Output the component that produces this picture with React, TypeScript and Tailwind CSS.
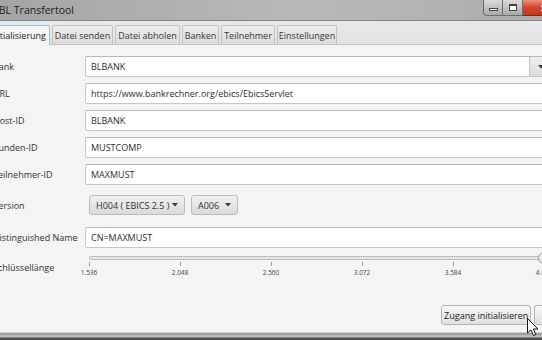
import React from "react";

const TABS: { label: string; cls: string; active?: boolean }[] = [
  { label: "Initialisierung", cls: "w-[62px]", active: true },
  { label: "Datei senden", cls: "w-[61px]" },
  { label: "Datei abholen", cls: "w-[65px]" },
  { label: "Banken", cls: "w-[37px]" },
  { label: "Teilnehmer", cls: "w-[54px]" },
  { label: "Einstellungen", cls: "w-[60px]" },
];

function Label({ children }: { children: React.ReactNode }) {
  return <div className="w-[92px] shrink-0 text-[#333] whitespace-nowrap">{children}</div>;
}

function TextField({ value }: { value: string }) {
  return (
    <div className="h-full flex-1 bg-white border border-[#c6c6c6] border-t-[#b8b8b8] rounded-[2px] flex items-center pl-[5px] text-[#2e2e2e] whitespace-nowrap">
      {value}
    </div>
  );
}

function Row({ label, value }: { label: string; value: string }) {
  return (
    <div className="flex items-center h-[21px]">
      <Label>{label}</Label>
      <TextField value={value} />
    </div>
  );
}

function Caret() {
  return (
    <svg width="6" height="4" viewBox="0 0 6 4" className="shrink-0">
      <path d="M0 0 L6 0 L3 3.5 Z" fill="#3a3a3a" />
    </svg>
  );
}

function Drop({ text, cls }: { text: string; cls: string }) {
  return (
    <div
      className={`${cls} h-[20px] flex items-center justify-between px-[6px] border border-[#bcbcbc] rounded-[3px] bg-gradient-to-b from-[#f1f1f1] to-[#dadada] text-[#333] whitespace-nowrap`}
    >
      <span>{text}</span>
      <Caret />
    </div>
  );
}

const TICKS = ["1.536", "2.048", "2.560", "3.072", "3.584", "4.096"];

export default function App() {
  return (
    <div className="relative w-[542px] h-[340px] overflow-hidden bg-[#f4f4f4] font-['Open_Sans','Noto_Sans',sans-serif] text-[9px] leading-none">
      <div className="ml-[-16px] w-[640px] h-[340px] flex flex-col">
        {/* title bar */}
        <div className="h-[21px] shrink-0 flex items-start bg-gradient-to-r from-[#a4a4a4] via-[#b9b9b9] to-[#a8a8a8] border-b border-[#858585]">
          <div className="pl-[9px] pt-[5px] text-[10.5px] text-[#1e1e1e]">EBL Transfertool</div>
          <div className="ml-auto mr-[58px] flex">
            <div className="w-[20px] h-[16px] border border-[#6e6e6e] border-t-0 rounded-bl-[4px] bg-gradient-to-b from-[#dcdcdc] to-[#a9a9a9] flex items-end justify-center pb-[4px]">
              <div className="w-[9px] h-[3px] bg-white border border-[#444]" />
            </div>
            <div className="w-[20px] h-[16px] border-b border-r border-[#6e6e6e] bg-gradient-to-b from-[#dcdcdc] to-[#a9a9a9] flex items-center justify-center">
              <div className="w-[8px] h-[7px] bg-white border border-[#444] border-t-2" />
            </div>
            <div className="w-[43px] h-[16px] border-b border-r border-[#7a2a1a] rounded-br-[4px] bg-gradient-to-b from-[#e8907a] via-[#d0452a] to-[#c0391f] flex items-center justify-center text-white text-[10px] font-bold">
              ✕
            </div>
          </div>
        </div>

        {/* tab strip */}
        <div className="h-[24px] shrink-0 flex items-end gap-[2px] pl-[4px] bg-gradient-to-b from-[#e9e9e9] to-[#e2e2e2] border-b border-[#c4c4c4]">
          {TABS.map((t) =>
            t.active ? (
              <div
                key={t.label}
                className={`${t.cls} h-[20px] mb-[-1px] flex items-center justify-end pr-[3px] bg-[#f4f4f4] border border-b-0 border-[#93c2e4] rounded-t-[2px] text-[#222] whitespace-nowrap overflow-hidden`}
              >
                {t.label}
              </div>
            ) : (
              <div
                key={t.label}
                className={`${t.cls} h-[19px] flex items-center justify-center bg-gradient-to-b from-[#ececec] to-[#dcdcdc] border border-b-0 border-[#c2c2c2] rounded-t-[2px] text-[#3a3a3a] whitespace-nowrap`}
              >
                {t.label}
              </div>
            )
          )}
        </div>

        {/* content */}
        <div className="flex-1 flex flex-col pt-[11px] pl-[9px] pr-[10px] pb-[7px]">
          <div className="flex flex-col gap-[6px]">
            <div className="flex items-center h-[21px]">
              <Label>Bank</Label>
              <div className="w-[467px] h-full flex bg-white border border-[#c6c6c6] border-t-[#b8b8b8] rounded-[2px]">
                <div className="flex-1 flex items-center pl-[5px] text-[#2e2e2e]">BLBANK</div>
                <div className="w-[22px] h-full flex items-center justify-center border-l border-[#c6c6c6] bg-gradient-to-b from-[#f0f0f0] to-[#dcdcdc]">
                  <Caret />
                </div>
              </div>
            </div>
            <Row label="URL" value="https://www.bankrechner.org/ebics/EbicsServlet" />
            <Row label="Host-ID" value="BLBANK" />
            <Row label="Kunden-ID" value="MUSTCOMP" />
            <Row label="Teilnehmer-ID" value="MAXMUST" />
          </div>

          <div className="flex items-center h-[20px] mt-[10px]">
            <Label>Version</Label>
            <div className="flex gap-[6px] pl-[4px]">
              <Drop text="H004 ( EBICS 2.5 )" cls="w-[96px]" />
              <Drop text="A006" cls="w-[47px]" />
            </div>
          </div>

          <div className="flex items-center h-[21px] mt-[12px]">
            <Label>Distinguished Name</Label>
            <TextField value="CN=MAXMUST" />
          </div>

          <div className="flex items-start h-[28px] mt-[3px]">
            <div className="pt-[12px]">
              <Label>Schlüssellänge</Label>
            </div>
            <div className="relative ml-[4px] w-[455px] h-full">
              <div className="absolute left-0 right-0 top-[5px] h-[4px] rounded-full bg-[#e6e6e6] border border-[#bdbdbd]" />
              {TICKS.map((t, i) => (
                <div key={t} className="absolute top-[11px] flex flex-col items-center w-[24px] ml-[-12px]" style={{ left: `${i * 91}px` }}>
                  <div className="w-px h-[4px] bg-[#9a9a9a]" />
                  <div className="mt-[4px] text-[6.5px] text-[#444]">{t}</div>
                </div>
              ))}
              <div className="absolute top-[1px] left-[449px] w-[12px] h-[12px] rounded-full border border-[#9f9f9f] bg-gradient-to-b from-[#fbfbfb] to-[#dedede]" />
            </div>
          </div>

          <div className="flex-1" />

          <div className="flex gap-[3px] h-[20px] pl-[448px]">
            <div className="w-[91px] h-full flex items-center justify-center border border-[#b4b4b4] rounded-[3px] bg-gradient-to-b from-[#f7f7f7] to-[#e0e0e0] text-[#222] whitespace-nowrap">
              Zugang initialisieren
            </div>
            <div className="w-[80px] h-full flex items-center justify-center border border-[#b4b4b4] rounded-[3px] bg-gradient-to-b from-[#f7f7f7] to-[#e0e0e0] text-[#222] whitespace-nowrap">
              Abbrechen
            </div>
          </div>
        </div>

        {/* bottom window border */}
        <div className="shrink-0">
          <div className="h-[1px] bg-[#d2d2d2]" />
          <div className="h-[2px] bg-[#9e9e9e]" />
          <div className="h-[2px] bg-[#b9b9b9]" />
          <div className="h-[1px] bg-[#8a8a8a]" />
          <div className="h-[2px] bg-[#4c4c4c]" />
        </div>
      </div>

      {/* mouse cursor */}
      <svg className="absolute left-[527px] top-[318px]" width="12" height="19" viewBox="0 0 12 19">
        <path d="M0.5 0.5 L0.5 15 L4 11.8 L6.5 17.5 L8.8 16.5 L6.4 11 L11 11 Z" fill="#fff" stroke="#111" strokeWidth="1" strokeLinejoin="round" />
      </svg>
    </div>
  );
}
